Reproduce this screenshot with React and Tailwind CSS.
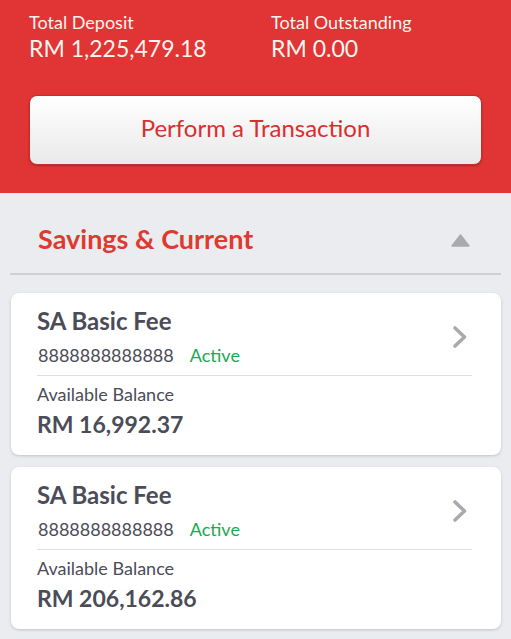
const accounts = [
  { name: 'SA Basic Fee', number: '8888888888888', status: 'Active', balance: 'RM 16,992.37' },
  { name: 'SA Basic Fee', number: '8888888888888', status: 'Active', balance: 'RM 206,162.86' },
];

function Chevron() {
  return (
    <svg width="16" height="24" viewBox="0 0 16 24" className="shrink-0 mr-[4px]">
      <polyline points="3,3 12.5,12 3,21" fill="none" stroke="#a9aaae" strokeWidth="3.6" strokeLinecap="round" strokeLinejoin="round" />
    </svg>
  );
}

function AccountCard({ account }) {
  return (
    <div className="bg-white rounded-[8px] shadow-[0_1px_3px_rgba(0,0,0,0.18)] pl-[26px] pr-[29px] pt-[15px] pb-[17px] text-[#4b4c58]">
      <div className="flex items-center justify-between">
        <div>
          <div className="text-[24px] leading-[26px] font-bold">{account.name}</div>
          <div className="mt-[10px] flex text-[18px] leading-[22px]">
            <span className="ml-px">{account.number}</span>
            <span className="ml-[16px] text-[#21a84f]">{account.status}</span>
          </div>
        </div>
        <Chevron />
      </div>
      <div className="mt-[9px] h-px bg-[#dedfe2]" />
      <div className="mt-[8px] text-[18px] leading-[20px]">Available Balance</div>
      <div className="mt-[6px] text-[23px] leading-[28px] font-bold">{account.balance}</div>
    </div>
  );
}

export default function App() {
  return (
    <div className="w-[511px] h-[639px] overflow-hidden bg-[#ebecf0] font-['Lato','Noto_Sans',sans-serif]">
      <header className="bg-[#e13434] px-[29px] pt-[12px] pb-[28px] text-[#fff4ef]">
        <div className="grid grid-cols-[242px_1fr]">
          <div>
            <div className="text-[18px] leading-[20px]">Total Deposit</div>
            <div className="mt-[3px] text-[23px] leading-[26px]">RM 1,225,479.18</div>
          </div>
          <div>
            <div className="text-[18px] leading-[20px]">Total Outstanding</div>
            <div className="mt-[3px] text-[23px] leading-[26px]">RM 0.00</div>
          </div>
        </div>
        <button className="mt-[34px] w-full h-[70px] rounded-[8px] border border-[#c42e2e] bg-gradient-to-b from-white to-[#e9e9ea] shadow-[0_1px_2px_rgba(0,0,0,0.25)] flex items-center justify-center pb-[4px] text-[24px] leading-[28px] text-[#d82f2e]">
          Perform a Transaction
        </button>
      </header>

      <section className="pt-[31px]">
        <div className="flex items-center justify-between pl-[38px] pr-[41px]">
          <h2 className="text-[27px] leading-[30px] font-bold text-[#e0392f]">Savings &amp; Current</h2>
          <svg width="19" height="13" viewBox="0 0 19 13" className="mt-[2px]">
            <path d="M9.5 1 L18 12 L1 12 Z" fill="#a9aaae" stroke="#a9aaae" strokeWidth="1.5" strokeLinejoin="round" />
          </svg>
        </div>
        <div className="mt-[19px] mx-[10px] h-[2px] bg-[#cfd0d4]" />
        <div className="mt-[18px] ml-[11px] mr-[10px] flex flex-col gap-[12px]">
          {accounts.map((a, i) => (
            <AccountCard key={i} account={a} />
          ))}
          <div className="h-[20px] bg-white rounded-t-[8px] shadow-[0_1px_3px_rgba(0,0,0,0.18)]" />
        </div>
      </section>
    </div>
  );
}
